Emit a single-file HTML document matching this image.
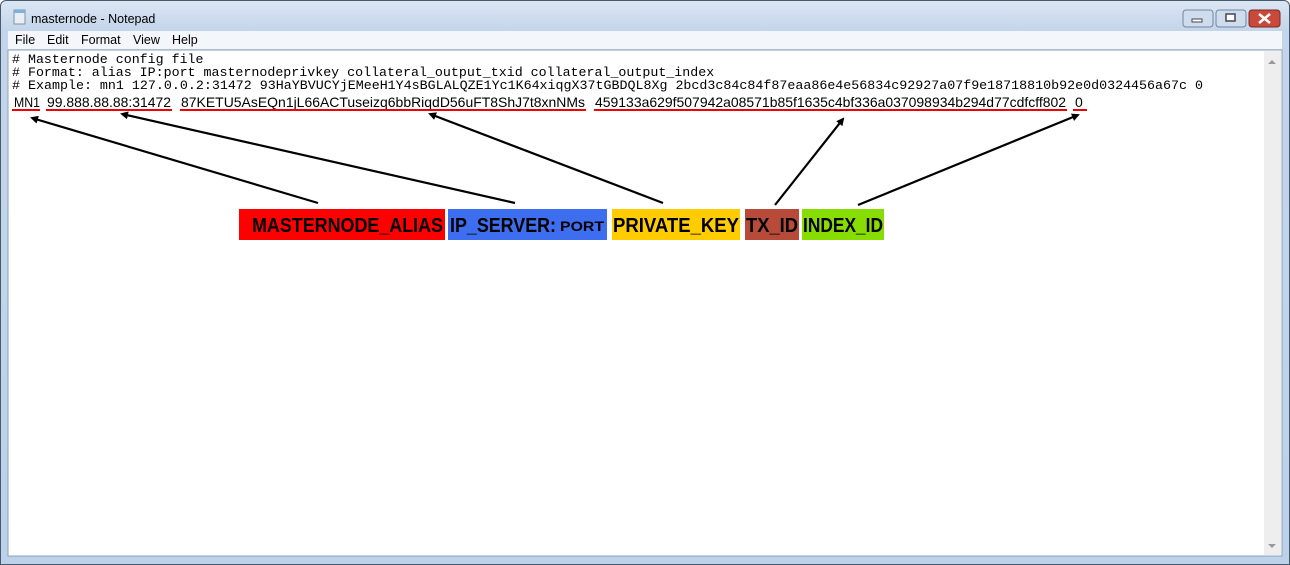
<!DOCTYPE html>
<html><head><meta charset="utf-8"><style>
body{margin:0;width:1290px;height:565px;overflow:hidden;background:#fff;font-family:"Liberation Sans",sans-serif}
.win{position:absolute;left:0;top:0;width:1288px;height:563px;border:1px solid #4a5a6e;border-radius:6px 6px 0 0;background:linear-gradient(#dbe6f3,#c3d5ea 30px,#bcd2ea);}
</style></head><body>
<div class="win"></div>
<svg width="1290" height="565" style="position:absolute;left:0;top:0" font-family="Liberation Sans, sans-serif">
<rect x="14" y="10" width="11" height="14" fill="#e8eef3" stroke="#7d92a8"/>
<rect x="14" y="10" width="11" height="3" fill="#7fb0d8"/>
<text x="31" y="23" font-size="12.5" fill="#000">masternode - Notepad</text>
<rect x="1183" y="10" width="30" height="17" rx="3" fill="#cfdcec" stroke="#6f86a3"/>
<rect x="1192" y="19" width="10" height="3" fill="#fff" stroke="#445"/>
<rect x="1216" y="10" width="30" height="17" rx="3" fill="#cfdcec" stroke="#6f86a3"/>
<rect x="1226" y="14" width="9" height="7" fill="#fff" stroke="#445" stroke-width="1.5"/>
<rect x="1249" y="10" width="31" height="17" rx="3" fill="#c9493a" stroke="#7a2a22"/>
<path d="M1259 14 L1270 23 M1270 14 L1259 23" stroke="#fff" stroke-width="2.5"/>
<rect x="8" y="31" width="1274" height="18" fill="#f3f6fb"/>
<g font-size="12.5" fill="#000"><text x="15" y="44">File</text><text x="47" y="44">Edit</text><text x="81" y="44">Format</text><text x="133" y="44">View</text><text x="172" y="44">Help</text></g>
<rect x="8" y="50" width="1274" height="506" fill="#fff" stroke="#8ea3b9"/>
<rect x="1264" y="51" width="17" height="504" fill="#eeeeee"/>
<path d="M1268 64 L1272 60 L1276 64 Z" fill="#999"/>
<path d="M1268 544 L1272 548 L1276 544 Z" fill="#999"/>
<g font-family="Liberation Mono, monospace" font-size="13.3" fill="#000">
<text x="12" y="63"># Masternode config file</text>
<text x="12" y="76"># Format: alias IP:port masternodeprivkey collateral_output_txid collateral_output_index</text>
<text x="12" y="89" textLength="1191" lengthAdjust="spacingAndGlyphs"># Example: mn1 127.0.0.2:31472 93HaYBVUCYjEMeeH1Y4sBGLALQZE1Yc1K64xiqgX37tGBDQL8Xg 2bcd3c84c84f87eaa86e4e56834c92927a07f9e18718810b92e0d0324456a67c 0</text>
</g>
<g font-size="14" fill="#000">
<text x="14" y="107" textLength="26" lengthAdjust="spacingAndGlyphs">MN1</text>
<text x="47" y="107" textLength="124" lengthAdjust="spacingAndGlyphs">99.888.88.88:31472</text>
<text x="181" y="107" textLength="404" lengthAdjust="spacingAndGlyphs">87KETU5AsEQn1jL66ACTuseizq6bbRiqdD56uFT8ShJ7t8xnNMs</text>
<text x="595" y="107" textLength="471" lengthAdjust="spacingAndGlyphs">459133a629f507942a08571b85f1635c4bf336a037098934b294d77cdfcff802</text>
<text x="1075" y="107">0</text>
</g>
<g stroke="#e00" stroke-width="2">
<line x1="12" y1="110" x2="40" y2="110"/><line x1="46" y1="110" x2="172" y2="110"/>
<line x1="180" y1="110" x2="586" y2="110"/><line x1="594" y1="110" x2="1067" y2="110"/>
<line x1="1073" y1="110" x2="1087" y2="110"/>
</g>
<defs><marker id="a" markerWidth="8" markerHeight="8" refX="6" refY="4" orient="auto" markerUnits="userSpaceOnUse" viewBox="0 0 8 8"><path d="M0 0L8 4L0 8Z" fill="#000"/></marker></defs>
<g stroke="#000" stroke-width="2.2" marker-end="url(#a)">
<line x1="318" y1="203" x2="32" y2="118"/>
<line x1="515" y1="203" x2="122" y2="114"/>
<line x1="663" y1="203" x2="430" y2="114"/>
<line x1="775" y1="205" x2="843" y2="119"/>
<line x1="858" y1="205" x2="1078" y2="115"/>
</g>
<rect x="239" y="209" width="206" height="31" fill="#ff0000"/>
<rect x="448" y="209" width="159" height="31" fill="#3d6ef0"/>
<rect x="612" y="209" width="128" height="31" fill="#ffcc00"/>
<rect x="745" y="209" width="54" height="31" fill="#b84a3a"/>
<rect x="802" y="209" width="82" height="31" fill="#88dd00"/>
<g font-weight="bold" font-size="20" fill="#000">
<text x="252" y="232" textLength="191" lengthAdjust="spacingAndGlyphs">MASTERNODE_ALIAS</text>
<text x="450" y="232" textLength="106" lengthAdjust="spacingAndGlyphs">IP_SERVER:</text>
<text x="560" y="231" font-size="14" textLength="44" lengthAdjust="spacingAndGlyphs">PORT</text>
<text x="613" y="232" textLength="126" lengthAdjust="spacingAndGlyphs">PRIVATE_KEY</text>
<text x="746" y="232" textLength="52" lengthAdjust="spacingAndGlyphs">TX_ID</text>
<text x="803" y="232" textLength="80" lengthAdjust="spacingAndGlyphs">INDEX_ID</text>
</g>
</svg>
</body></html>
